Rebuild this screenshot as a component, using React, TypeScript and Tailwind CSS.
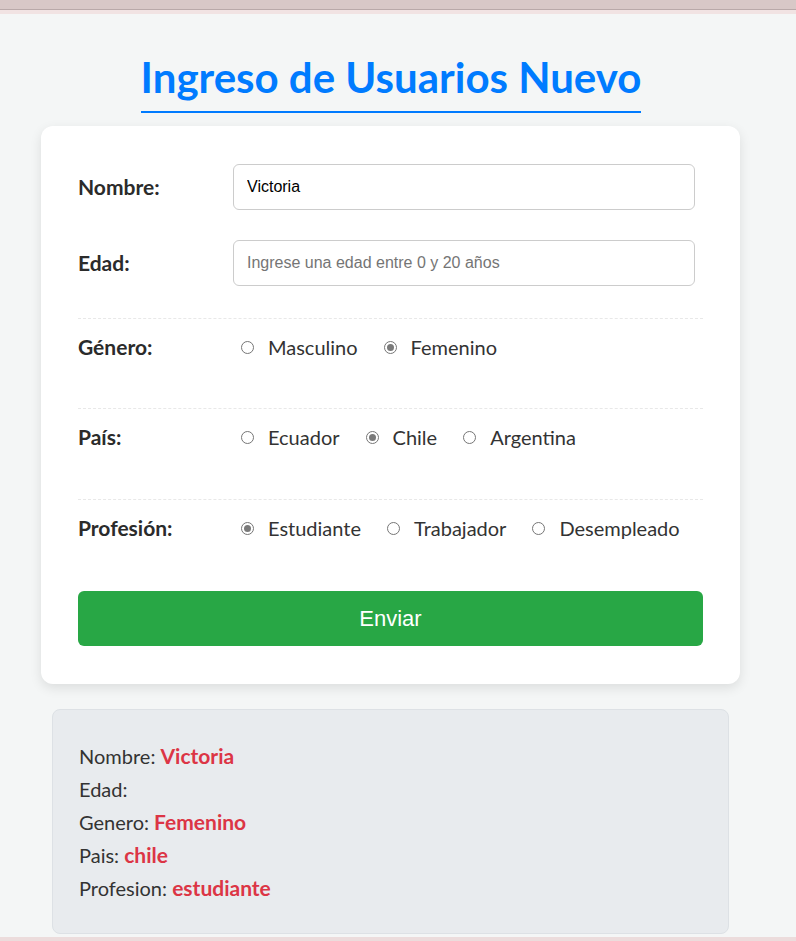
import React from "react";

const sans = "font-['Lato','Noto_Sans',sans-serif]";
const arial = "font-['Liberation_Sans',Arial,sans-serif]";

function Radio({ label, checked }: { label: string; checked?: boolean }) {
  return (
    <label className="flex items-center">
      <span className="ml-[8px] flex h-[13px] w-[13px] items-center justify-center rounded-full border border-[#767676]">
        {checked && <span className="h-[7px] w-[7px] rounded-full bg-[#7a7a7a]" />}
      </span>
      <span className="ml-[14px] mr-[18px] text-[20px] leading-[24px] text-[#333]">{label}</span>
    </label>
  );
}

function RadioRow({
  label,
  options,
  value,
  h,
}: {
  label: string;
  options: string[];
  value: string;
  h: string;
}) {
  return (
    <div className={`flex ${h} border-t border-dashed border-[#e8e8e8] pt-[16px]`}>
      <div className="w-[155px] text-[21px] font-bold leading-[24px] text-[#2b2b2b]">{label}</div>
      <div className="flex items-center self-start">
        {options.map((o) => (
          <Radio key={o} label={o} checked={o === value} />
        ))}
      </div>
    </div>
  );
}

function Line({ k, v }: { k: string; v?: string }) {
  return (
    <div className="h-[33px] leading-[33px]">
      {k}: {v && <b className="text-[21px] leading-none text-[#dc3545]">{v}</b>}
    </div>
  );
}

export default function App() {
  return (
    <div className={`min-h-[941px] bg-[#f4f6f6] ${sans}`}>
      <div className="h-[9px] bg-[#d8c8c7]" />
      <div className="h-[1px] bg-[#b9a9a9]" />
      <div className="h-[4px] bg-[#f1e3e3]" />

      <div className="flex justify-center pt-[37px]">
        <h1 className="ml-[-14px] border-b-2 border-[#007bff] pb-[8px] text-[42px] font-bold leading-[52px] text-[#007bff]">
          Ingreso de Usuarios Nuevo
        </h1>
      </div>

      <div className="ml-[41px] mt-[13px] w-[699px] rounded-[12px] bg-white px-[37px] pb-[38px] pt-[38px] shadow-[0_4px_12px_rgba(0,0,0,0.1)]">
        <div className="mb-[30px] flex items-center">
          <div className="w-[155px] text-[21px] font-bold leading-[24px] text-[#2b2b2b]">Nombre:</div>
          <input
            readOnly
            value="Victoria"
            className={`h-[46px] w-[462px] rounded-[6px] border border-[#cccccc] px-[13px] text-[16px] text-black outline-none ${arial}`}
          />
        </div>
        <div className="mb-[32px] flex items-center">
          <div className="w-[155px] text-[21px] font-bold leading-[24px] text-[#2b2b2b]">Edad:</div>
          <input
            readOnly
            placeholder="Ingrese una edad entre 0 y 20 años"
            className={`h-[46px] w-[462px] rounded-[6px] border border-[#cccccc] px-[13px] text-[16px] text-black outline-none placeholder:text-[#757575] ${arial}`}
          />
        </div>

        <RadioRow h="h-[90px]" label="Género:" options={["Masculino", "Femenino"]} value="Femenino" />
        <RadioRow h="h-[91px]" label="País:" options={["Ecuador", "Chile", "Argentina"]} value="Chile" />
        <RadioRow
          h="h-[91px]"
          label="Profesión:"
          options={["Estudiante", "Trabajador", "Desempleado"]}
          value="Estudiante"
        />

        <button
          className={`mt-[1px] flex h-[55px] w-full items-center justify-center rounded-[6px] bg-[#28a745] text-[22px] text-white ${arial}`}
        >
          Enviar
        </button>
      </div>

      <div className="ml-[52px] mt-[25px] w-[677px] rounded-[8px] border border-[#dde1e5] bg-[#e8ebee] pb-[28px] pl-[26px] pt-[30px] text-[20px] text-[#333]">
        <Line k="Nombre" v="Victoria" />
        <Line k="Edad" />
        <Line k="Genero" v="Femenino" />
        <Line k="Pais" v="chile" />
        <Line k="Profesion" v="estudiante" />
      </div>

      <div className="mt-[3px] h-[5px] bg-[#ecdcdc]" />
    </div>
  );
}
